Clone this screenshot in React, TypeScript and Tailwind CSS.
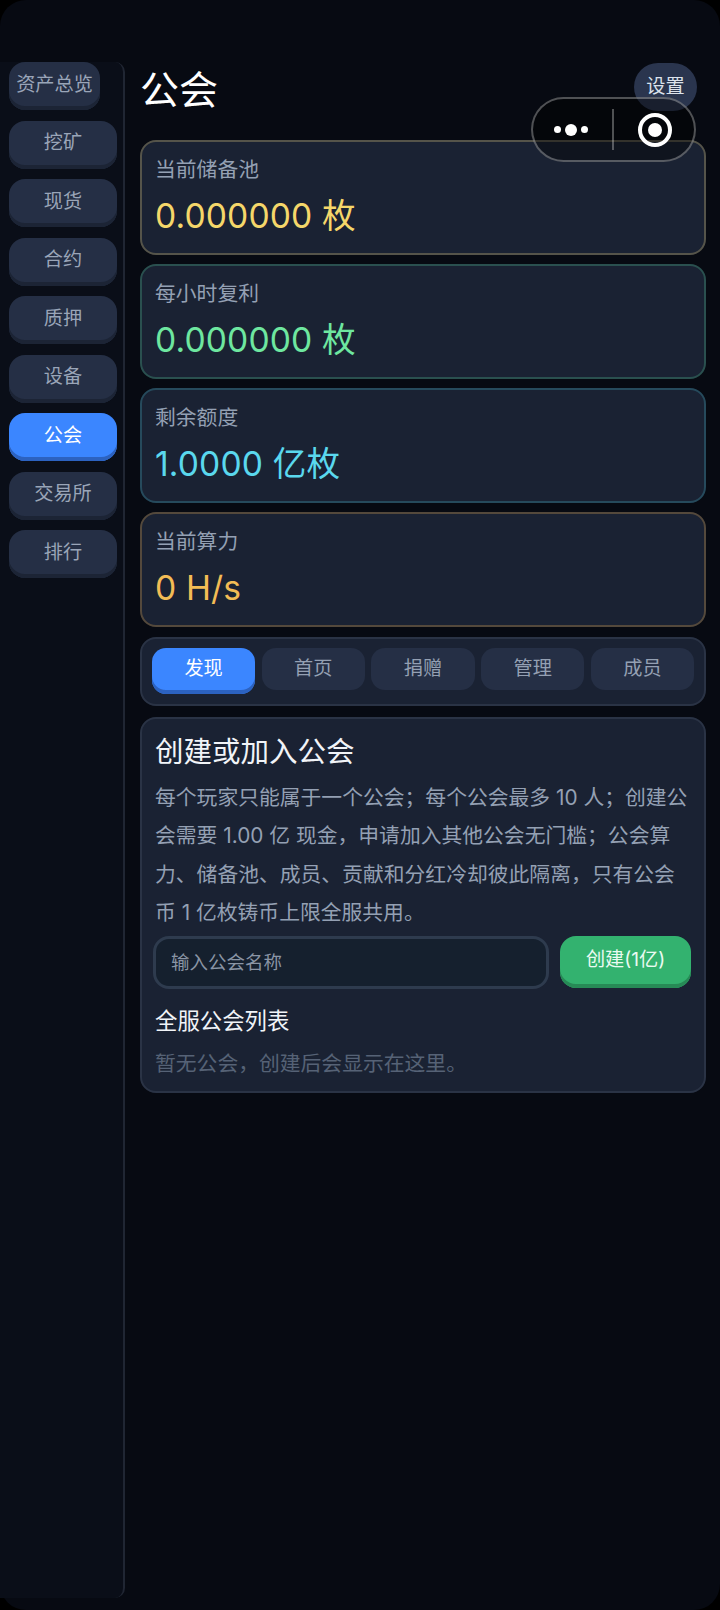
const font = { fontFamily: 'Inter, "Noto Sans CJK SC", sans-serif' };

const navItems = ["资产总览", "挖矿", "现货", "合约", "质押", "设备", "公会", "交易所", "排行"];
const tabs = ["发现", "首页", "捐赠", "管理", "成员"];

const stats = [
  { label: "当前储备池", value: "0.000000 枚", border: "border-[#55544a]", text: "text-[#f5d76a]" },
  { label: "每小时复利", value: "0.000000 枚", border: "border-[#2a504f]", text: "text-[#6ee7a0]" },
  { label: "剩余额度", value: "1.0000 亿枚", border: "border-[#264a5c]", text: "text-[#5ad8ee]" },
  { label: "当前算力", value: "0 H/s", border: "border-[#54493c]", text: "text-[#f3bc55]" },
];

function NavButton({ label, active, first }: { label: string; active: boolean; first: boolean }) {
  return (
    <button
      type="button"
      className={`flex h-[48px] items-center justify-center whitespace-nowrap rounded-[16px] pb-[3px] text-[19.2px] leading-none ${
        first ? "w-[91px]" : "w-[108px]"
      } ${
        active
          ? "bg-[#3b86ff] text-white shadow-[inset_0_-4px_0_#2c62c0]"
          : "bg-[#252f45] text-[#9aa5b8] shadow-[inset_0_-4px_0_#1c2435]"
      }`}
    >
      {label}
    </button>
  );
}

function StatCard({ label, value, border, text }: { label: string; value: string; border: string; text: string }) {
  return (
    <div className={`flex h-[115px] flex-col rounded-[16px] border-2 bg-[#1a2233] px-[13px] pt-[13.5px] ${border}`}>
      <span className="text-[20.8px] leading-[30px] text-[#94a0b3]">{label}</span>
      <span className={`mt-[6px] text-[33.6px] leading-[50px] tracking-[0.15px] ${text}`}>{value}</span>
    </div>
  );
}

// wechat mini program capsule, sits on top of the page
function Capsule() {
  return (
    <div className="absolute left-[531px] top-[97px] flex h-[65px] w-[165px] items-center rounded-full border-2 border-white/30 bg-black/40">
      <div className="flex w-[55px] items-center justify-end gap-[4px]">
        <span className="h-[7px] w-[7px] rounded-full bg-white" />
        <span className="h-[12px] w-[12px] rounded-full bg-white" />
        <span className="h-[7px] w-[7px] rounded-full bg-white" />
      </div>
      <div className="ml-[24px] h-[41px] w-[2px] bg-white/30" />
      <div className="ml-[24px] flex h-[34px] w-[34px] items-center justify-center rounded-full border-[4px] border-white">
        <span className="h-[14px] w-[14px] rounded-full bg-white" />
      </div>
    </div>
  );
}

export default function App() {
  return (
    <div className="relative h-[1610px] w-[720px] overflow-hidden bg-black" style={font}>
      <div className="flex h-full w-full rounded-[26px] bg-[#070a12] pb-[12px] pt-[62px]">
        <aside className="flex w-[125px] shrink-0 flex-col gap-[10.5px] rounded-r-[10px] border-r-2 border-[#202633] bg-[#0a0e18] pl-[9px]">
          {navItems.map((item, i) => (
            <NavButton key={item} label={item} active={item === "公会"} first={i === 0} />
          ))}
        </aside>

        <main className="flex min-w-0 flex-1 flex-col pl-[15px] pr-[14px]">
          <header className="flex h-[77.5px] shrink-0 items-start justify-between">
            <h1 className="pt-[3px] text-[39px] leading-[50px] text-white">公会</h1>
            <button
              type="button"
              className="mr-[9px] mt-[1px] flex h-[48px] w-[63px] items-center justify-center rounded-full bg-[#2a354e] text-[19.2px] leading-none text-[#dbe2ec]"
            >
              设置
            </button>
          </header>

          <div className="flex flex-col gap-[9px]">
            {stats.map((s) => (
              <StatCard key={s.label} {...s} />
            ))}

            <div className="mt-[1px] flex h-[69px] gap-[6.5px] rounded-[16px] border-2 border-[#2a3345] bg-[#1a2233] px-[10px] pt-[9px]">
              {tabs.map((t, i) => (
                <button
                  key={t}
                  type="button"
                  className={`flex flex-1 items-center justify-center rounded-[14px] text-[19.2px] leading-none ${
                    i === 0
                      ? "h-[46px] bg-[#3b86ff] pb-[4px] text-white shadow-[inset_0_-4px_0_#2c62c0]"
                      : "h-[42px] bg-[#252f45] text-[#94a0b3]"
                  }`}
                >
                  {t}
                </button>
              ))}
            </div>

            <section className="mt-[2px] flex h-[376px] flex-col rounded-[16px] border-2 border-[#2a3345] bg-[#1a2233] px-[13px] pt-[13.5px]">
              <h2 className="text-[28.5px] leading-[40px] text-[#f1f4f8]">创建或加入公会</h2>
              <p className="mt-[7px] text-[20.8px] leading-[38.4px] text-[#94a0b3]">
                每个玩家只能属于一个公会；每个公会最多 10 人；创建公会需要 1.00 亿 现金，申请加入其他公会无门槛；公会算力、储备池、成员、贡献和分红冷却彼此隔离，只有公会币 1 亿枚铸币上限全服共用。
              </p>
              <div className="ml-[-2px] mt-[3px] flex items-start gap-[11px]">
                <input
                  placeholder="输入公会名称"
                  className="h-[53px] w-[397px] rounded-[16px] border-[3px] border-[#2e3b4e] bg-[#15202e] px-[15px] text-[18.5px] text-[#dbe2ec] outline-none placeholder:text-[#8a95a5]"
                />
                <button
                  type="button"
                  className="flex h-[52px] w-[131px] items-center justify-center rounded-[16px] bg-[#33b26f] pb-[4px] text-[19.2px] leading-none text-[#eafaf1] shadow-[inset_0_-4px_0_#278a56]"
                >
                  创建(1亿)
                </button>
              </div>
              <h3 className="mt-[16px] text-[22.4px] leading-[32px] text-[#f1f4f8]">全服公会列表</h3>
              <p className="mt-[12px] text-[20.8px] leading-[30px] text-[#566276]">暂无公会，创建后会显示在这里。</p>
            </section>
          </div>
        </main>
      </div>
      <Capsule />
    </div>
  );
}
